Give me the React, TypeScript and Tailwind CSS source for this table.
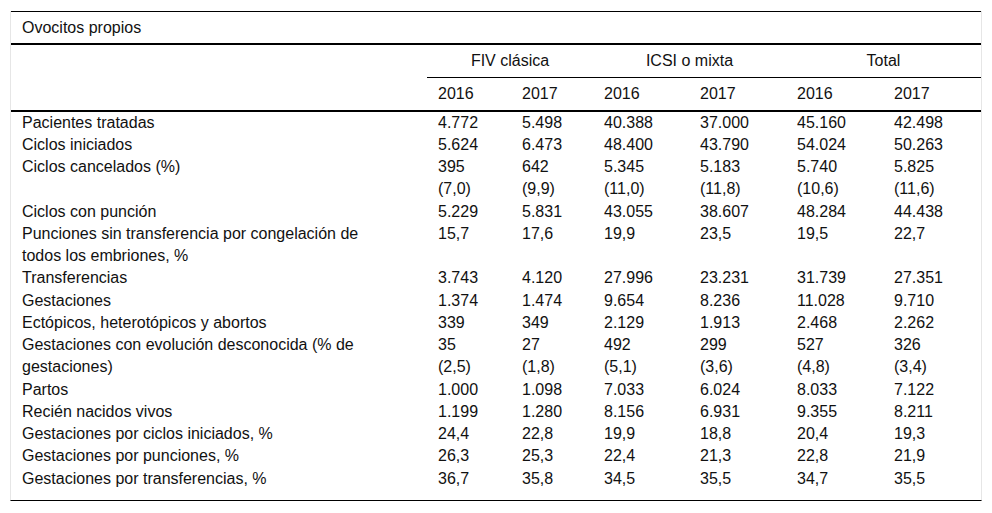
import React from "react";

type Row = { label: string; vals: string[][] };

const rows: Row[] = [
  { label: "Pacientes tratadas", vals: [["4.772"], ["5.498"], ["40.388"], ["37.000"], ["45.160"], ["42.498"]] },
  { label: "Ciclos iniciados", vals: [["5.624"], ["6.473"], ["48.400"], ["43.790"], ["54.024"], ["50.263"]] },
  {
    label: "Ciclos cancelados (%)",
    vals: [["395", "(7,0)"], ["642", "(9,9)"], ["5.345", "(11,0)"], ["5.183", "(11,8)"], ["5.740", "(10,6)"], ["5.825", "(11,6)"]],
  },
  { label: "Ciclos con punción", vals: [["5.229"], ["5.831"], ["43.055"], ["38.607"], ["48.284"], ["44.438"]] },
  {
    label: "Punciones sin transferencia por congelación de todos los embriones, %",
    vals: [["15,7"], ["17,6"], ["19,9"], ["23,5"], ["19,5"], ["22,7"]],
  },
  { label: "Transferencias", vals: [["3.743"], ["4.120"], ["27.996"], ["23.231"], ["31.739"], ["27.351"]] },
  { label: "Gestaciones", vals: [["1.374"], ["1.474"], ["9.654"], ["8.236"], ["11.028"], ["9.710"]] },
  { label: "Ectópicos, heterotópicos y abortos", vals: [["339"], ["349"], ["2.129"], ["1.913"], ["2.468"], ["2.262"]] },
  {
    label: "Gestaciones con evolución desconocida (% de gestaciones)",
    vals: [["35", "(2,5)"], ["27", "(1,8)"], ["492", "(5,1)"], ["299", "(3,6)"], ["527", "(4,8)"], ["326", "(3,4)"]],
  },
  { label: "Partos", vals: [["1.000"], ["1.098"], ["7.033"], ["6.024"], ["8.033"], ["7.122"]] },
  { label: "Recién nacidos vivos", vals: [["1.199"], ["1.280"], ["8.156"], ["6.931"], ["9.355"], ["8.211"]] },
  { label: "Gestaciones por ciclos iniciados, %", vals: [["24,4"], ["22,8"], ["19,9"], ["18,8"], ["20,4"], ["19,3"]] },
  { label: "Gestaciones por punciones, %", vals: [["26,3"], ["25,3"], ["22,4"], ["21,3"], ["22,8"], ["21,9"]] },
  { label: "Gestaciones por transferencias, %", vals: [["36,7"], ["35,8"], ["34,5"], ["35,5"], ["34,7"], ["35,5"]] },
];

const years = ["2016", "2017", "2016", "2017", "2016", "2017"];

export default function App() {
  return (
    <div
      className="bg-white w-[992px] h-[513px] pt-[11px] px-[10px] text-[#111] text-[16px]"
      style={{ fontFamily: '"Liberation Sans", Arial, sans-serif' }}
    >
      <div className="w-[972px] border-x border-[#e6e6e6] pb-[10px] border-b border-b-black">
        <table className="w-[970px] border-collapse table-fixed">
          <colgroup>
            <col className="w-[416px]" />
            <col className="w-[84px]" />
            <col className="w-[82px]" />
            <col className="w-[96px]" />
            <col className="w-[97px]" />
            <col className="w-[97px]" />
            <col className="w-[98px]" />
          </colgroup>
          <thead>
            <tr className="border-t border-black border-b-2 border-b-black">
              <td colSpan={7} className="pl-[11px] pt-[2px] h-[32px] align-middle leading-[22px]">
                Ovocitos propios
              </td>
            </tr>
            <tr>
              <td className="h-[34px]"></td>
              <td colSpan={2} className="text-center border-b-[1.5px] border-black align-middle leading-[22px]">
                FIV clásica
              </td>
              <td colSpan={2} className="text-center border-b-[1.5px] border-black align-middle leading-[22px]">
                ICSI o mixta
              </td>
              <td colSpan={2} className="text-center border-b-[1.5px] border-black align-middle leading-[22px]">
                Total
              </td>
            </tr>
            <tr className="border-b-2 border-black">
              <td className="h-[33px]"></td>
              {years.map((y, i) => (
                <td key={i} className="pl-[11px] align-middle leading-[22px]">
                  {y}
                </td>
              ))}
            </tr>
          </thead>
          <tbody>
            {rows.map((r, ri) => (
              <tr key={ri}>
                <td className="pl-[11px] align-top leading-[22.25px]">
                  <div className="w-[360px]">{r.label}</div>
                </td>
                {r.vals.map((v, vi) => (
                  <td key={vi} className="pl-[11px] align-top leading-[22.25px]">
                    {v.map((line, li) => (
                      <div key={li}>{line}</div>
                    ))}
                  </td>
                ))}
              </tr>
            ))}
          </tbody>
        </table>
      </div>
    </div>
  );
}
